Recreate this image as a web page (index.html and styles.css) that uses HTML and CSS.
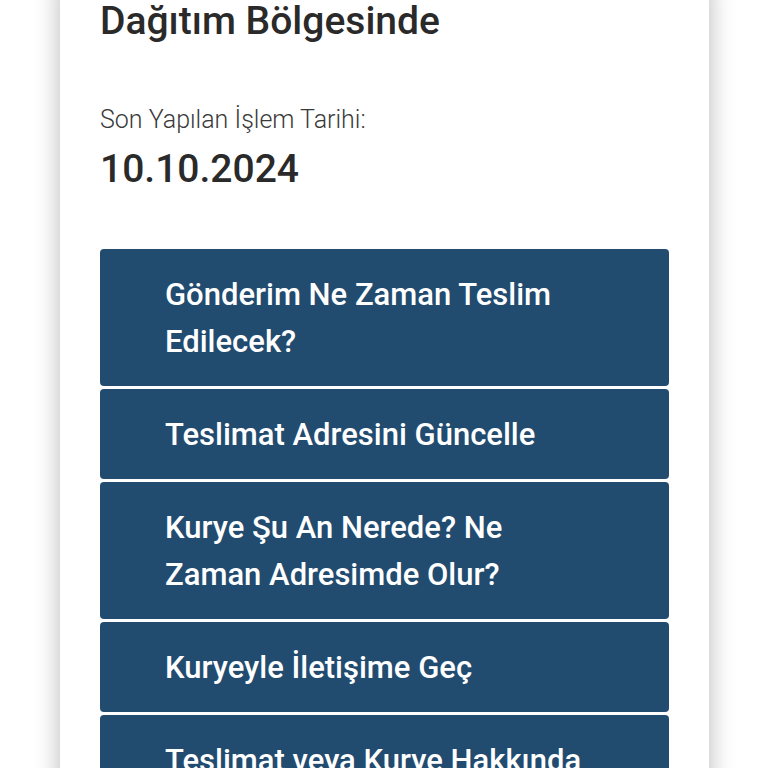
FILE: index.html
```html
<!DOCTYPE html>
<html>
<head>
  <title>Gönderi Takibi</title>
  <link rel="stylesheet" href="styles.css">
</head>
<body>
  <div class="card">
    <h2 class="status">Dağıtım Bölgesinde</h2>

    <div class="lastLabel">Son Yapılan İşlem Tarihi:</div>
    <div class="lastDate">10.10.2024</div>

    <div class="actions">
      <a class="action" href="#">Gönderim Ne Zaman Teslim Edilecek?</a>
      <a class="action" href="#">Teslimat Adresini Güncelle</a>
      <a class="action" href="#">Kurye Şu An Nerede? Ne Zaman Adresimde Olur?</a>
      <a class="action" href="#">Kuryeyle İletişime Geç</a>
      <a class="action" href="#">Teslimat veya Kurye Hakkında Şikayet</a>
    </div>
  </div>
</body>
</html>
```

FILE: styles.css
```css
body {
  margin: 0;
  background: #fff;
  font-family: Roboto, "Noto Sans", sans-serif;
  overflow: hidden;
}
.card {
  width: 569px;
  margin: -20px 0 0 60px;
  padding: 0 40px 40px;
  background: #fff;
  box-shadow: 0 0 24px rgba(0, 0, 0, 0.28);
}
.status {
  margin: 0;
  font-size: 39px;
  font-weight: 500;
  line-height: 48px;
  color: #2a2a2a;
  padding-top: 17px;
}
.lastLabel {
  margin-top: 60px;
  font-size: 25px;
  font-weight: 300;
  color: #3a3a3a;
}
.lastDate {
  margin-top: 12px;
  font-size: 39px;
  font-weight: 500;
  color: #2a2a2a;
}
.actions {
  margin-top: 57px;
}
.action {
  display: block;
  background: #224b70;
  color: #fff;
  text-decoration: none;
  font-size: 31px;
  font-weight: 500;
  line-height: 47px;
  padding: 22px 70px 21px 65px;
  border-radius: 4px;
  margin-bottom: 3px;
}
```
